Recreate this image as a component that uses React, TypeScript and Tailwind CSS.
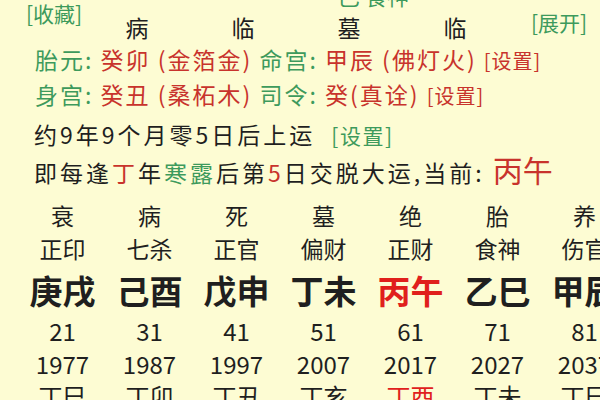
import React from 'react'

const green = 'text-[#3d9a5c]'
const red = 'text-[#c8332c]'

type Col = { state: string; god: string; gz: string; age: string; year: string; next: string; hot?: boolean }

const cols: Col[] = [
    { state: '衰', god: '正印', gz: '庚戌', age: '21', year: '1977', next: '丁巳' },
    { state: '病', god: '七杀', gz: '己酉', age: '31', year: '1987', next: '丁卯' },
    { state: '死', god: '正官', gz: '戊申', age: '41', year: '1997', next: '丁丑' },
    { state: '墓', god: '偏财', gz: '丁未', age: '51', year: '2007', next: '丁亥' },
    { state: '绝', god: '正财', gz: '丙午', age: '61', year: '2017', next: '丁酉', hot: true },
    { state: '胎', god: '食神', gz: '乙巳', age: '71', year: '2027', next: '丁未' },
    { state: '养', god: '伤官', gz: '甲辰', age: '81', year: '2037', next: '丁巳' },
]

export default function App() {
    return (
        <div className="relative w-[600px] h-[400px] overflow-hidden bg-[#fdfcd3] text-[#1f1f1f] font-['Noto_Sans_CJK_SC','Noto_Sans',sans-serif]">
            {/* clipped row above the visible area */}
            <div className={`absolute left-[338px] top-[-17px] text-[22px] leading-[24px] ${green}`}>巳 食神</div>

            <div className="flex h-[42px]">
                <div className={`w-[84px] pl-[26px] text-[21px] leading-[26px] ${green}`}>[收藏]</div>
                {['病', '临', '墓', '临'].map((t, i) => (
                    <div key={i} className="w-[106px] pt-[13px] text-center text-[23px] leading-[28px]">
                        {t}
                    </div>
                ))}
                <div className={`ml-[23px] pt-[9px] text-[21px] leading-[26px] ${green}`}>[展开]</div>
            </div>

            <div className="pl-[35px] text-[23px] tracking-[2px] leading-[35px] whitespace-nowrap">
                <div>
                    <span className={green}>胎元: </span>
                    <span className={red}>癸卯 (金箔金) </span>
                    <span className={green}>命宫: </span>
                    <span className={red}>甲辰 (佛灯火) </span>
                    <span className={`text-[20px] leading-none tracking-[1px] ${red}`}>[设置]</span>
                </div>
                <div>
                    <span className={green}>身宫: </span>
                    <span className={red}>癸丑 (桑柘木) </span>
                    <span className={green}>司令: </span>
                    <span className={red}>癸(真诠) </span>
                    <span className={`text-[20px] leading-none tracking-[1px] ${red}`}>[设置]</span>
                </div>
            </div>

            <div className="pl-[34px] mt-[3px] text-[23px] tracking-[3px] leading-[38px] whitespace-nowrap">
                <div>
                    约9年9个月零5日后上运
                    <span className={`ml-[16px] text-[21px] leading-none tracking-[1.5px] ${green}`}>[设置]</span>
                </div>
                <div>
                    即每逢<span className={red}>丁</span>年<span className={green}>寒露</span>后第
                    <span className={red}>5</span>日交脱大运,当前:{' '}
                    <span className={`text-[30px] leading-none tracking-[0px] ${red}`}>丙午</span>
                </div>
            </div>

            <div className="mt-[8px] pl-[19px] flex">
                {cols.map((c) => (
                    <div key={c.year} className="w-[87px] shrink-0 flex flex-col items-center whitespace-nowrap">
                        <div className="text-[23px] leading-[33px]">{c.state}</div>
                        <div className="text-[23px] leading-[33px]">{c.god}</div>
                        <div className={`text-[33px] leading-[51px] font-bold ${c.hot ? 'text-[#e0201c]' : ''}`}>{c.gz}</div>
                        <div className="text-[24px] leading-[30px]">{c.age}</div>
                        <div className="text-[24px] leading-[35px]">{c.year}</div>
                        <div className={`text-[24px] leading-[29px] ${c.hot ? 'text-[#e0201c]' : ''}`}>{c.next}</div>
                    </div>
                ))}
            </div>
        </div>
    )
}
